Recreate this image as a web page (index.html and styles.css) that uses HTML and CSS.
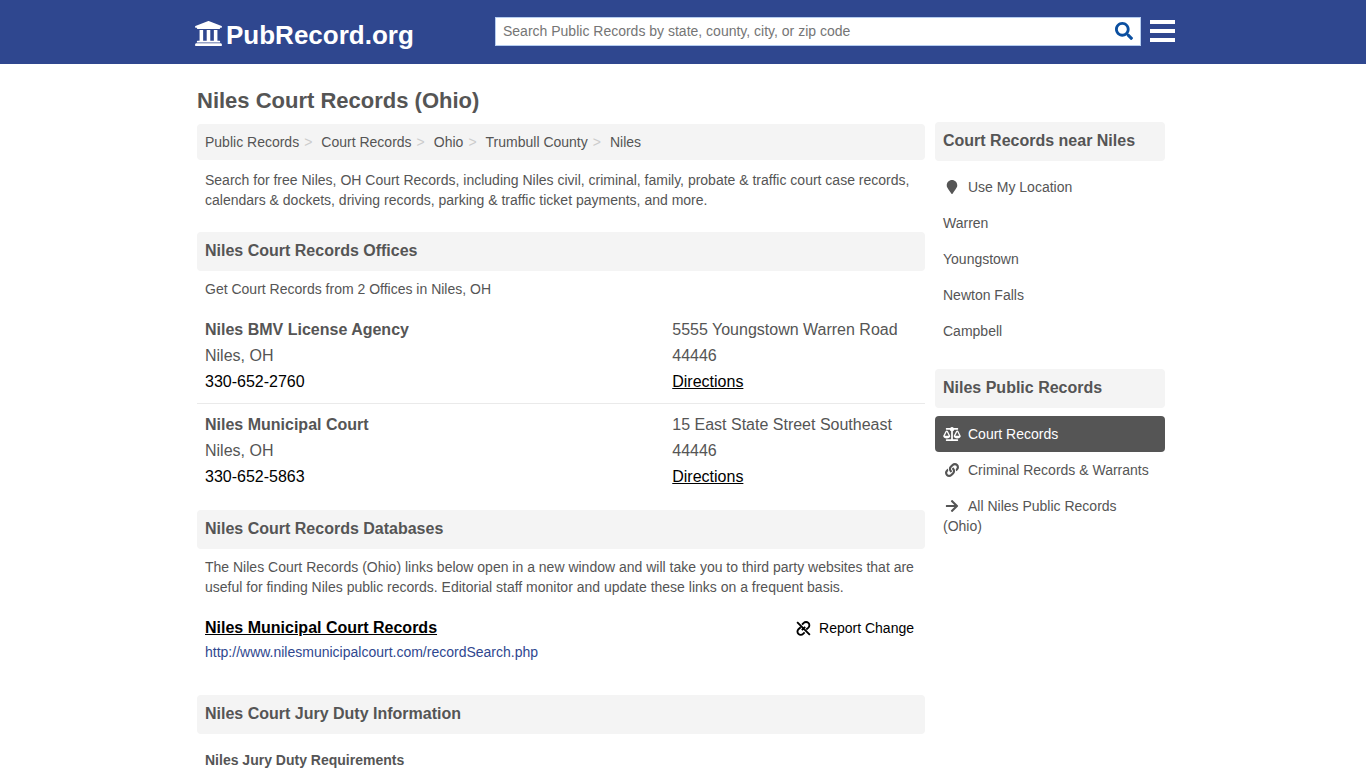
FILE: index.html
```html
<!DOCTYPE html>
<html lang="en">
<head>
<meta charset="utf-8">
<title>Niles Court Records (Ohio)</title>
<meta name="viewport" content="width=device-width, initial-scale=1">
<link rel="stylesheet" href="styles.css">
</head>
<body>
<header class="site-header">
  <div class="header-inner">
    <a class="logo" href="#">
      <svg class="logo-icon" viewBox="16 32 480 448" aria-hidden="true"><path d="M496 128v16a8 8 0 0 1-8 8h-24v12c0 6.627-5.373 12-12 12H60c-6.627 0-12-5.373-12-12v-12H24a8 8 0 0 1-8-8v-16a8 8 0 0 1 4.941-7.392l232-88a7.996 7.996 0 0 1 6.118 0l232 88A8 8 0 0 1 496 128zm-24 304H40c-13.255 0-24 10.745-24 24v16a8 8 0 0 0 8 8h464a8 8 0 0 0 8-8v-16c0-13.255-10.745-24-24-24zM96 192v192H60c-6.627 0-12 5.373-12 12v20h416v-20c0-6.627-5.373-12-12-12h-36V192h-64v192h-64V192h-64v192h-64V192H96z"/></svg>
      <span>PubRecord.org</span>
    </a>
    <form class="search" role="search">
      <input class="search-input" type="text" aria-label="Search public records" placeholder="Search Public Records by state, county, city, or zip code">
      <button class="search-button" type="button" aria-label="Search">
        <svg class="search-icon" viewBox="0 0 512 512" aria-hidden="true"><path d="M505 442.7L405.3 343c-4.5-4.5-10.6-7-17-7H372c27.6-35.3 44-79.7 44-128C416 93.1 322.9 0 208 0S0 93.1 0 208s93.1 208 208 208c48.3 0 92.7-16.4 128-44v16.3c0 6.4 2.5 12.5 7 17l99.7 99.7c9.4 9.4 24.6 9.4 33.9 0l28.3-28.3c9.4-9.4 9.4-24.6.1-34zM208 336c-70.7 0-128-57.2-128-128 0-70.7 57.2-128 128-128 70.7 0 128 57.2 128 128 0 70.7-57.2 128-128 128z"/></svg>
      </button>
    </form>
    <button class="menu-button" type="button" aria-label="Menu">
      <svg class="menu-icon" viewBox="0 0 25 22" aria-hidden="true"><path d="M0 0h25v4H0zM0 9h25v4H0zM0 18h25v4H0z"/></svg>
    </button>
  </div>
</header>

<div class="page">
  <main class="main">
    <h1 class="page-title">Niles Court Records (Ohio)</h1>
    <nav class="breadcrumb" aria-label="Breadcrumb">
      <a href="#">Public Records</a>
      <a href="#">Court Records</a>
      <a href="#">Ohio</a>
      <a href="#">Trumbull County</a>
      <a href="#">Niles</a>
    </nav>
    <p class="intro">Search for free Niles, OH Court Records, including Niles civil, criminal, family, probate &amp; traffic court case records, calendars &amp; dockets, driving records, parking &amp; traffic ticket payments, and more.</p>

    <section class="section">
      <h2 class="bar">Niles Court Records Offices</h2>
      <p class="note">Get Court Records from 2 Offices in Niles, OH</p>
      <ul class="offices">
        <li class="office">
          <div>
            <h3 class="office-name">Niles BMV License Agency</h3>
            <p>Niles, OH</p>
            <a class="phone" href="tel:330-652-2760">330-652-2760</a>
          </div>
          <address class="address">
            <p>5555 Youngstown Warren Road</p>
            <p>44446</p>
            <a class="directions" href="#">Directions</a>
          </address>
        </li>
        <li class="office">
          <div>
            <h3 class="office-name">Niles Municipal Court</h3>
            <p>Niles, OH</p>
            <a class="phone" href="tel:330-652-5863">330-652-5863</a>
          </div>
          <address class="address">
            <p>15 East State Street Southeast</p>
            <p>44446</p>
            <a class="directions" href="#">Directions</a>
          </address>
        </li>
      </ul>
    </section>

    <section class="section">
      <h2 class="bar">Niles Court Records Databases</h2>
      <p class="note">The Niles Court Records (Ohio) links below open in a new window and will take you to third party websites that are useful for finding Niles public records. Editorial staff monitor and update these links on a frequent basis.</p>
      <div class="database">
        <div>
          <a class="database-name" href="#">Niles Municipal Court Records</a>
          <p class="database-url">http://www.nilesmunicipalcourt.com/recordSearch.php</p>
        </div>
        <a class="report" href="#">
          <svg class="report-icon" viewBox="0 0 16 16" aria-hidden="true"><path d="M1.200 1.200l13.600 13.600M6.400 3.800l1.800-1.700a3.500 3.500 0 0 1 5 0a3.500 3.500 0 0 1 0 5l-2.200 2M9.200 12.200l-1.600 1.600a3.500 3.500 0 0 1-5 0a3.500 3.500 0 0 1 0-5l2.400-2.200M6.200 9.800l3.600-3.600"/></svg>
          Report Change
        </a>
      </div>
    </section>

    <section class="section">
      <h2 class="bar">Niles Court Jury Duty Information</h2>
      <h3 class="subheading">Niles Jury Duty Requirements</h3>
    </section>
  </main>

  <aside class="side">
    <section>
      <h2 class="bar">Court Records near Niles</h2>
      <ul class="links">
        <li><a class="link" href="#"><svg class="link-icon" viewBox="-128 0 640 512" aria-hidden="true"><path d="M172.268 501.67C26.97 291.031 0 269.413 0 192 0 85.961 85.961 0 192 0s192 85.961 192 192c0 77.413-26.97 99.031-172.268 309.67-9.535 13.774-29.93 13.773-39.464 0z"/></svg>Use My Location</a></li>
        <li><a class="link" href="#">Warren</a></li>
        <li><a class="link" href="#">Youngstown</a></li>
        <li><a class="link" href="#">Newton Falls</a></li>
        <li><a class="link" href="#">Campbell</a></li>
      </ul>
    </section>
    <section>
      <h2 class="bar">Niles Public Records</h2>
      <ul class="links">
        <li><a class="link link-active" href="#" aria-current="page"><svg class="link-icon" viewBox="0 0 640 512" aria-hidden="true"><path d="M256 336h-.02c0-16.18 1.34-8.73-85.05-181.51-17.65-35.29-68.19-35.36-85.87 0C-2.06 328.75.02 320.33.02 336H0c0 44.18 57.31 80 128 80s128-35.82 128-80zM128 176l72 144H56l72-144zm511.98 160c0-16.18 1.34-8.73-85.05-181.51-17.65-35.29-68.19-35.36-85.87 0-87.12 174.26-85.04 165.84-85.04 181.51H384c0 44.18 57.31 80 128 80s128-35.82 128-80h-.02zM440 320l72-144 72 144H440zm88 128H352V153.25c23.51-10.29 41.16-31.48 46.39-57.25H528c8.84 0 16-7.16 16-16V48c0-8.84-7.16-16-16-16H383.64C369.04 12.68 346.09 0 320 0s-49.04 12.68-63.64 32H112c-8.84 0-16 7.16-16 16v32c0 8.84 7.16 16 16 16h129.61c5.23 25.76 22.87 46.96 46.39 57.25V448H112c-8.84 0-16 7.16-16 16v32c0 8.84 7.16 16 16 16h416c8.84 0 16-7.16 16-16v-32c0-8.84-7.16-16-16-16z"/></svg>Court Records</a></li>
        <li><a class="link" href="#"><svg class="link-icon" viewBox="-64 0 640 512" aria-hidden="true"><path d="M326.612 185.391c59.747 59.809 58.927 155.698.36 214.59-.11.12-.24.25-.36.37l-67.2 67.2c-59.27 59.27-155.699 59.262-214.96 0-59.27-59.26-59.27-155.7 0-214.96l37.106-37.106c9.84-9.84 26.786-3.3 27.294 10.606.648 17.722 3.826 35.527 9.69 52.721 1.986 5.822.567 12.262-3.783 16.612l-13.087 13.087c-28.026 28.026-28.905 73.66-1.155 101.96 28.024 28.579 74.086 28.749 102.325.51l67.2-67.19c28.191-28.191 28.073-73.757 0-101.83-3.701-3.694-7.429-6.564-10.341-8.569a16.037 16.037 0 0 1-6.947-12.606c-.396-10.567 3.348-21.456 11.698-29.806l21.054-21.055c5.521-5.521 14.182-6.199 20.584-1.731a152.482 152.482 0 0 1 20.522 17.197zM467.547 44.449c-59.261-59.262-155.69-59.27-214.96 0l-67.2 67.2c-.12.12-.25.25-.36.37-58.566 58.892-59.387 154.781.36 214.59a152.454 152.454 0 0 0 20.521 17.196c6.402 4.468 15.064 3.789 20.584-1.731l21.054-21.055c8.35-8.35 12.094-19.239 11.698-29.806a16.037 16.037 0 0 0-6.947-12.606c-2.912-2.005-6.64-4.875-10.341-8.569-28.073-28.073-28.191-73.639 0-101.83l67.2-67.19c28.239-28.239 74.3-28.069 102.325.51 27.75 28.3 26.872 73.934-1.155 101.96l-13.087 13.087c-4.35 4.35-5.769 10.79-3.783 16.612 5.864 17.194 9.042 34.999 9.69 52.721.509 13.906 17.454 20.446 27.294 10.606l37.106-37.106c59.271-59.259 59.271-155.699.001-214.959z"/></svg>Criminal Records &amp; Warrants</a></li>
        <li><a class="link" href="#"><svg class="link-icon" viewBox="-96 0 640 512" aria-hidden="true"><path d="M190.5 66.9l22.2-22.2c9.4-9.4 24.6-9.4 33.9 0L441 239c9.4 9.4 9.4 24.6 0 33.9L246.6 467.3c-9.4 9.4-24.6 9.4-33.9 0l-22.2-22.2c-9.5-9.5-9.3-25 .4-34.3L311.4 296H24c-13.3 0-24-10.7-24-24v-32c0-13.3 10.7-24 24-24h287.4L190.9 101.2c-9.8-9.3-10-24.8-.4-34.3z"/></svg>All Niles Public Records (Ohio)</a></li>
      </ul>
    </section>
  </aside>
</div>
</body>
</html>
```
FILE: styles.css
```css
* { box-sizing: border-box; }

body {
  margin: 0;
  font-family: "Liberation Sans", Arial, sans-serif;
  font-size: 14px;
  line-height: 20px;
  color: #555;
  background: #fff;
}

h1, h2, h3, p, ul { margin: 0; padding: 0; }
ul { list-style: none; }
a { color: inherit; text-decoration: none; }
button { border: 0; padding: 0; background: none; cursor: pointer; }
svg { fill: currentColor; }

.site-header { background: #2f478f; color: #fff; }

.header-inner {
  display: flex;
  align-items: center;
  max-width: 984px;
  height: 64px;
  margin: 0 auto;
  padding: 0 0 2px 4px;
}

.logo {
  display: flex;
  align-items: center;
  gap: 4px;
  width: 300px;
  padding-top: 8px;
  font-size: 26px;
  font-weight: bold;
  line-height: 32px;
}
.logo-icon { width: 27px; height: 25px; margin-bottom: 3px; }

.search {
  display: flex;
  flex: 1;
  height: 29px;
  background: #fff;
  border: 1px solid #b5cdf0;
}
.search-input {
  flex: 1;
  min-width: 0;
  padding: 0 7px;
  border: 0;
  outline: 0;
  background: none;
  font: inherit;
  color: #555;
}
.search-input::placeholder { color: #757575; }
.search-button { width: 32px; color: #0b4fa0; }
.search-icon { display: block; width: 18px; height: 18px; margin: 0 auto; }

.menu-button { margin-left: 9px; color: #fff; }
.menu-icon { display: block; width: 25px; height: 22px; }

.page {
  display: flex;
  gap: 10px;
  max-width: 980px;
  margin: 0 auto;
  padding: 0 8px 0 4px;
}
.main { flex: 1; min-width: 0; }
.side { width: 230px; padding-top: 58px; }

.page-title {
  padding: 23px 0 9px;
  font-size: 22px;
  line-height: 28px;
}

.breadcrumb {
  display: flex;
  padding: 8px;
  border-radius: 4px;
  background: #f4f4f4;
}
.breadcrumb a:not(:last-child)::after {
  content: ">";
  padding: 0 9px 0 5px;
  color: #ccc;
}

.intro { padding: 10px 8px; }
.section { margin-top: 12px; }

.bar {
  padding: 9px 8px 10px;
  border-radius: 4px;
  background: #f4f4f4;
  font-size: 16px;
  line-height: 20px;
}
.note { padding: 8px 8px 0; }

.offices { padding-top: 10px; font-size: 16px; line-height: 26px; }
.office {
  display: grid;
  grid-template-columns: 21fr 11fr;
  padding: 8px;
}
.office + .office { border-top: 1px solid #eaeaea; }
.office-name { font-size: 16px; }
.address { font-style: normal; }
.phone { color: #000; }
.directions { color: #000; text-decoration: underline; }

.database {
  display: flex;
  justify-content: space-between;
  align-items: flex-start;
  padding: 18px 11px 21px 8px;
}
.database-name {
  display: block;
  padding: 3px 0 2px;
  font-size: 16px;
  font-weight: bold;
  line-height: 20px;
  color: #000;
  text-decoration: underline;
}
.database-url { padding-top: 2px; color: #2f478f; }
.report {
  display: flex;
  align-items: center;
  gap: 8px;
  padding-top: 3px;
  color: #000;
}
.report-icon { width: 15px; height: 15px; fill: none; stroke: currentColor; stroke-width: 2; }

.subheading { padding: 16px 8px; font-size: 14px; }

.links { padding: 8px 0 20px; }
.link { display: block; padding: 8px; border-radius: 4px; }
.link-active { background: #555; color: #fff; }
.link-icon {
  width: 18px;
  height: 14px;
  margin-right: 7px;
  vertical-align: -2px;
}
```
